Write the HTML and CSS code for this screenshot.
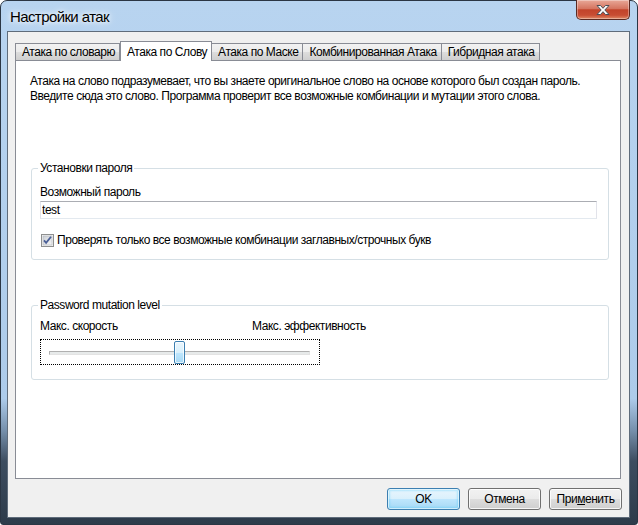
FILE: index.html
```html
<!DOCTYPE html>
<html lang="ru">
  <head>
    <meta charset="UTF-8" />
    <title>Настройки атак</title>
    <link rel="stylesheet" href="styles.css">
  </head>
  <body>
    <div class="window">
      <div class="titlebar">
        <span class="title">Настройки атак</span>
        <button class="close-btn" title="Закрыть">
          <svg width="16" height="12" viewBox="0 0 16 12">
            <path d="M2 1.5h3.5L8 4.3l2.5-2.8H14L9.8 6 14 10.5h-3.5L8 7.7l-2.5 2.8H2L6.2 6z"
                  fill="#fff" stroke="#4a4f57" stroke-width="1" stroke-linejoin="round" />
          </svg>
        </button>
      </div>

      <div class="client">
        <div class="tabs">
          <div class="tab">Атака по словарю</div>
          <div class="tab active">Атака по Слову</div>
          <div class="tab">Атака по Маске</div>
          <div class="tab">Комбинированная Атака</div>
          <div class="tab">Гибридная атака</div>
        </div>

        <div class="tab-panel">
          <p class="description">
            Атака на слово подразумевает, что вы знаете оригинальное слово на основе которого был создан пароль.<br>
            Введите сюда это слово. Программа проверит все возможные комбинации и мутации этого слова.
          </p>

          <fieldset class="group group-password">
            <legend>Установки пароля</legend>
            <label class="field-label" for="password">Возможный пароль</label>
            <input id="password" class="text-input" type="text" value="test">
            <label class="check-row">
              <span class="checkbox">
                <svg width="13" height="13" viewBox="0 0 13 13">
                  <defs>
                    <linearGradient id="cbFill" x1="0" y1="0" x2="1" y2="1">
                      <stop offset="0" stop-color="#cbcfd5" />
                      <stop offset="1" stop-color="#f6f6f6" />
                    </linearGradient>
                  </defs>
                  <rect x="0.5" y="0.5" width="12" height="12" fill="#f4f4f4" stroke="#8e8f8f" />
                  <rect x="2" y="2" width="9" height="9" fill="url(#cbFill)" stroke="#aeb3b9" stroke-width="0.6" />
                  <path d="M3 6.4l2.1 2.4L10 2.8" fill="none" stroke="#4a5f97" stroke-width="1.8" />
                </svg>
              </span>
              Проверять только все возможные комбинации заглавных/строчных букв
            </label>
          </fieldset>

          <fieldset class="group group-mutation">
            <legend>Password mutation level</legend>
            <div class="slider-labels">
              <span class="slider-min">Макс. скорость</span>
              <span>Макс. эффективность</span>
            </div>
            <div class="slider">
              <div class="slider-track">
                <div class="slider-thumb" style="left: 124px"></div>
              </div>
            </div>
          </fieldset>
        </div>

        <div class="actions">
          <button class="btn btn-default">OK</button>
          <button class="btn">Отмена</button>
          <button class="btn">При<u>м</u>енить</button>
        </div>
      </div>
    </div>
  </body>
</html>
```

FILE: styles.css
```css
/* Basis */
body {
  margin: 0;
  padding: 0;
  background: #fff;
  font-family: "Liberation Sans", Arial, sans-serif;
  font-size: 12px;
  letter-spacing: -0.45px;
  color: #000;
}

/* Glass window frame */
.window {
  box-sizing: border-box;
  width: 638px;
  height: 525px;
  display: flex;
  flex-direction: column;
  padding: 0 7px 6px 6px;
  border: 1px solid #2b3644;
  border-radius: 7px 7px 3px 3px;
  background: linear-gradient(180deg, #b8d4f0 0%, #adcbea 76%, #7791ad 82%, #3d4d60 88%, #2d3b4a 100%);
}

.titlebar {
  height: 30px;
  display: flex;
  justify-content: space-between;
  align-items: flex-start;
}

.title {
  padding: 7px 0 0 3px;
  font-size: 15px;
  line-height: 18px;
  letter-spacing: -0.6px;
  color: #000;
  text-shadow: 0 0 8px #fff, 0 0 4px #fff;
}

.close-btn {
  width: 54px;
  height: 20px;
  margin-top: -1px;
  padding: 0;
  display: flex;
  align-items: center;
  justify-content: center;
  border: 1px solid #5a2a22;
  border-top: none;
  border-radius: 0 0 5px 5px;
  background: linear-gradient(180deg, #e8a898 0%, #d57560 45%, #c2432a 52%, #c84d33 80%, #e08a66 100%);
  box-shadow: inset 0 0 0 1px rgba(255, 255, 255, 0.35);
}

/* Client area */
.client {
  flex: 1;
  display: flex;
  flex-direction: column;
  padding: 9px 8px 7px 7px;
  border: 1px solid #5f6c7b;
  background-color: #f0f0f0;
}

/* Tabs */
.tabs {
  display: flex;
  align-items: flex-end;
  height: 19px;
}

.tab {
  box-sizing: border-box;
  height: 17px;
  padding: 1px 4px 0 6px;
  line-height: 15px;
  white-space: nowrap;
  border: 1px solid #898c95;
  border-bottom: none;
  border-left: none;
  background: linear-gradient(180deg, #f2f2f2 0%, #ebebeb 50%, #dddddd 51%, #cfcfcf 100%);
}

.tab:first-child {
  border-left: 1px solid #898c95;
}

.tab.active {
  position: relative;
  z-index: 1;
  height: 20px;
  margin-bottom: -1px;
  padding-top: 3px;
  border-left: 1px solid #898c95;
  background: #fff;
}

.tab.active + .tab {
  border-left: none;
}

.tab-panel {
  flex: 1;
  padding: 13px 11px 0 14px;
  border: 1px solid #898c95;
  background-color: #fff;
}

.description {
  margin: 0;
  line-height: 15px;
  white-space: nowrap;
}

/* Group boxes */
.group {
  min-width: 0;
  margin: 57px 0 0 1px;
  padding: 9px 11px 11px 8px;
  border: 1px solid #d5dfe5;
  border-radius: 3px;
}

.group legend {
  margin-left: -2px;
  padding: 0 2px;
  line-height: 15px;
}

.group-mutation {
  margin-top: 38px;
  padding-top: 6px;
  padding-bottom: 14px;
}

.field-label {
  display: block;
  line-height: 15px;
}

.text-input {
  box-sizing: border-box;
  display: block;
  width: 100%;
  height: 18px;
  margin-top: 1px;
  padding: 0 1px;
  font-family: inherit;
  font-size: 12px;
  letter-spacing: inherit;
  color: #000;
  border: 1px solid #e2e3ea;
  border-top-color: #abadb3;
  border-bottom-color: #e3e9ef;
  outline: none;
}

.check-row {
  display: flex;
  align-items: center;
  gap: 3px;
  margin-top: 14px;
  line-height: 15px;
}

.checkbox {
  display: flex;
  width: 13px;
  height: 13px;
  margin-left: 1px;
}

/* Slider */
.slider-labels {
  display: flex;
  line-height: 15px;
}

.slider-min {
  width: 212px;
}

.slider {
  box-sizing: border-box;
  width: 280px;
  height: 26px;
  margin-top: 5px;
  padding-top: 11px;
  border: 1px dotted #000;
}

.slider-track {
  position: relative;
  box-sizing: border-box;
  height: 4px;
  margin: 0 9px 0 8px;
  border: 1px solid #b0b0b0;
  border-right-color: #e3e3e3;
  border-bottom-color: #e3e3e3;
  background-color: #e7eaea;
}

.slider-thumb {
  position: absolute;
  top: -11px;
  box-sizing: border-box;
  width: 11px;
  height: 23px;
  border: 1px solid #3c7fb1;
  border-radius: 2px;
  background: linear-gradient(180deg, #eaf6fd 0%, #d9f0fc 50%, #bee6fd 51%, #a7d9f5 100%);
  box-shadow: inset 0 0 0 1px rgba(255, 255, 255, 0.7);
}

/* Dialog buttons */
.actions {
  display: flex;
  justify-content: flex-end;
  gap: 8px;
  margin: 9px -1px 0 0;
}

.btn {
  box-sizing: border-box;
  width: 73px;
  height: 22px;
  padding: 0;
  font-family: inherit;
  font-size: 12px;
  letter-spacing: inherit;
  color: #000;
  border: 1px solid #707070;
  border-radius: 3px;
  background: linear-gradient(180deg, #f2f2f2 0%, #ebebeb 50%, #dddddd 51%, #cfcfcf 100%);
  box-shadow: inset 0 0 0 1px rgba(255, 255, 255, 0.8);
}

.btn-default {
  border-color: #3c7fb1;
  background: linear-gradient(180deg, #eaf6fd 0%, #d9f0fc 50%, #bee6fd 51%, #a7d9f5 100%);
  box-shadow: inset 0 0 0 1px rgba(255, 255, 255, 0.6), inset 0 0 2px 2px rgba(72, 200, 250, 0.35);
}

.btn u {
  text-decoration: underline;
}
```
